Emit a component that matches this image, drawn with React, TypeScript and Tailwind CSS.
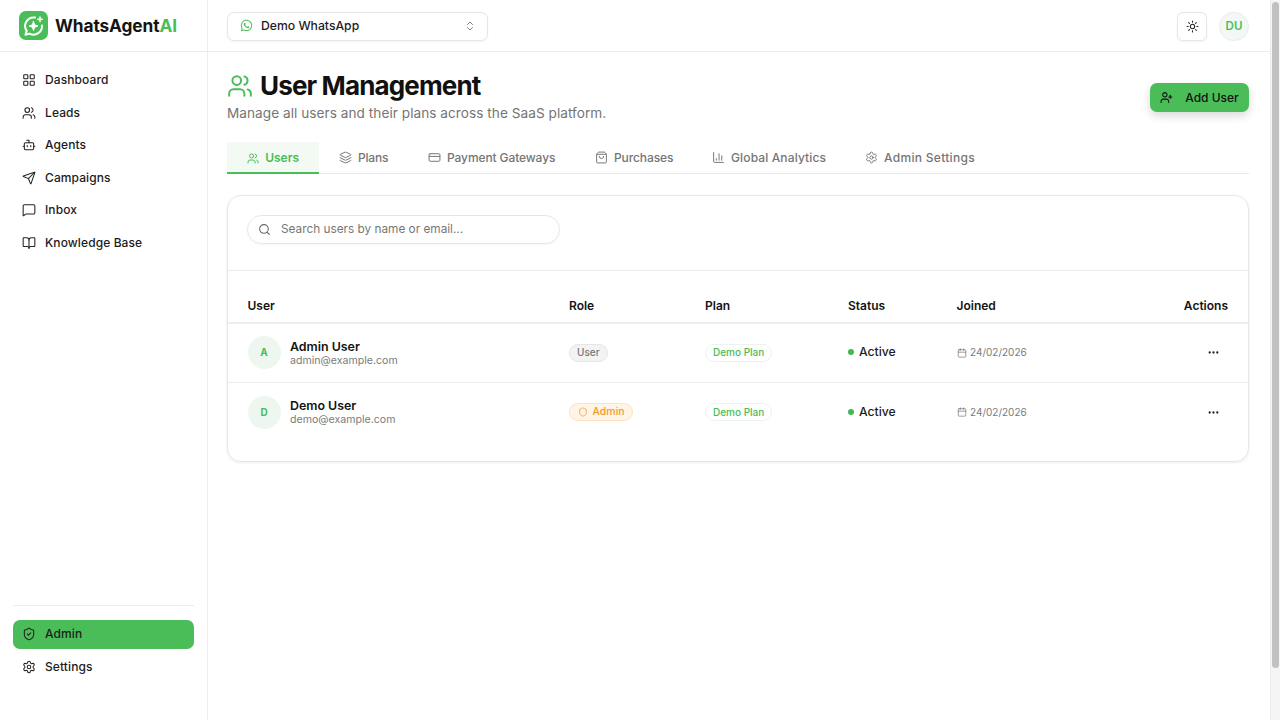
import React from "react";
import { LayoutGrid, Users, Bot, Send, MessageSquare, BookOpen, ShieldCheck, Settings, ChevronsUpDown, Sun, UserPlus, Layers, CreditCard, ShoppingBag, ChartColumn, Search, Calendar, Ellipsis, Shield } from "lucide-react";
import { FaWhatsapp } from "react-icons/fa";

const nav = [
  { label: "Dashboard", Icon: LayoutGrid },
  { label: "Leads", Icon: Users },
  { label: "Agents", Icon: Bot },
  { label: "Campaigns", Icon: Send },
  { label: "Inbox", Icon: MessageSquare },
  { label: "Knowledge Base", Icon: BookOpen },
];

const tabs = [
  { label: "Plans", Icon: Layers, w: "w-[89px] tracking-[-0.2px]" },
  { label: "Payment Gateways", Icon: CreditCard, w: "w-[167px] tracking-[-0.1px]" },
  { label: "Purchases", Icon: ShoppingBag, w: "w-[117px] tracking-[-0.1px]" },
  { label: "Global Analytics", Icon: ChartColumn, w: "w-[153px] tracking-[0.13px]" },
  { label: "Admin Settings", Icon: Settings, w: "w-[149px] tracking-[0.3px]" },
];

function Logo() {
  return (
    <div className="w-[29px] h-[29px] rounded-[7px] bg-[#4abd58] flex items-center justify-center shrink-0">
      <svg viewBox="0 0 24 24" className="w-[24px] h-[24px]" fill="none" stroke="white" strokeWidth="2" strokeLinecap="round" strokeLinejoin="round">
        <path d="M20 11.5A8.5 8.5 0 0 1 7.6 19.6L3.5 20.8l1.2-3.9A8.5 8.5 0 0 1 13 3.6" />
        <path d="M11.5 7.5l1.2 3.3 3.3 1.2-3.3 1.2-1.2 3.3-1.2-3.3L7 12l3.3-1.2z" fill="white" strokeWidth="1" />
        <path d="M18 3v4.4M15.8 5.2h4.4" strokeWidth="1.6" />
      </svg>
    </div>
  );
}

function NavItem({ label, Icon, active }: { label: string; Icon: React.ComponentType<any>; active?: boolean }) {
  return (
    <div className={`h-[29px] flex items-center gap-[9px] px-[9px] rounded-[7px] text-[12px] font-medium tracking-[0.1px] text-[#1c1c1c] ${active ? "bg-[#4abd58]" : ""}`}>
      <Icon className="w-[14px] h-[14px] text-[#222]" strokeWidth={1.8} />
      <span>{label}</span>
    </div>
  );
}

function Row({ initial, name, email, admin }: { initial: string; name: string; email: string; admin?: boolean }) {
  return (
    <div className="grid grid-cols-[321.5px_136px_143px_108.5px_1fr_auto] items-center h-[59px] pl-[19.5px] pr-5 border-b border-[#eeeeee] last:border-b-0">
      <div className="flex items-center gap-[9.5px]">
        <div className="w-[33px] h-[33px] rounded-full bg-[#edf7ef] text-[#4abd58] text-[10px] font-bold flex items-center justify-center">{initial}</div>
        <div className="flex flex-col">
          <span className="text-[12.4px] leading-[15px] font-semibold text-[#141414]">{name}</span>
          <span className="text-[10.6px] leading-[13px] text-[#7b7b7b]">{email}</span>
        </div>
      </div>
      <div className="flex">
        {admin ? (
          <span className="inline-flex items-center gap-[5px] h-[18px] px-[7.5px] rounded-full bg-[#fff4e6] border border-[#fde3c2] text-[#f5982a] text-[10.5px] font-medium">
            <Shield className="w-[10px] h-[10px]" strokeWidth={1.8} />
            Admin
          </span>
        ) : (
          <span className="inline-flex items-center h-[18px] px-[7px] rounded-full bg-[#f3f3f3] border border-[#e6e6e6] text-[#777] text-[10px] font-medium">User</span>
        )}
      </div>
      <div className="flex">
        <span className="inline-flex items-center h-[18px] px-[7px] rounded-full bg-white border border-[#e9f5eb] text-[#4abd58] text-[10px] font-medium">Demo Plan</span>
      </div>
      <div className="flex items-center gap-[5px]">
        <span className="w-[6px] h-[6px] rounded-full bg-[#3fb950]" />
        <span className="text-[12.2px] font-medium text-[#1c1c1c]">Active</span>
      </div>
      <div className="flex items-center gap-[3.5px] text-[10px] text-[#7b7b7b]">
        <Calendar className="w-[10px] h-[10px]" strokeWidth={1.8} />
        24/02/2026
      </div>
      <div className="w-[29px] flex justify-center">
        <Ellipsis className="w-[13px] h-[13px] text-[#222]" strokeWidth={2.2} />
      </div>
    </div>
  );
}

export default function App() {
  return (
    <div className="flex h-screen w-[1280px] overflow-hidden bg-white font-['Inter',sans-serif] text-[#141414]">
      <aside className="w-[208px] shrink-0 border-r border-[#ececec] flex flex-col">
        <div className="h-[52px] shrink-0 flex items-center gap-[7px] px-[19px] border-b border-[#ececec]">
          <Logo />
          <span className="text-[17.3px] font-bold tracking-[-0.1px] text-[#141414]">
            WhatsAgent<span className="text-[#4abd58]">AI</span>
          </span>
        </div>
        <nav className="flex-1 flex flex-col gap-[3.5px] px-[13px] pt-[13.5px]">
          {nav.map((n) => (
            <NavItem key={n.label} {...n} />
          ))}
        </nav>
        <div className="px-[13px] pb-[39px]">
          <div className="border-t border-[#ececec] pt-[14px] flex flex-col gap-[3.5px]">
            <NavItem label="Admin" Icon={ShieldCheck} active />
            <NavItem label="Settings" Icon={Settings} />
          </div>
        </div>
      </aside>

      <div className="flex-1 flex flex-col min-w-0">
        <header className="h-[52px] shrink-0 flex items-center justify-between pl-[19px] pr-[21px] pt-[1px] border-b border-[#ececec]">
          <div className="w-[261px] h-[29px] flex items-center justify-between pl-[12px] pr-[11px] rounded-[7px] border border-[#e6e6e6] shadow-[0_1px_2px_rgba(0,0,0,0.05)]">
            <div className="flex items-center gap-[8px]">
              <FaWhatsapp className="w-[13px] h-[13px] text-[#4abd58]" />
              <span className="text-[12.2px] font-medium text-[#1c1c1c]">Demo WhatsApp</span>
            </div>
            <ChevronsUpDown className="w-[12px] h-[12px] text-[#777]" strokeWidth={1.8} />
          </div>
          <div className="flex items-center gap-[12px]">
            <div className="w-[30px] h-[29px] rounded-[6px] border border-[#e6e6e6] shadow-[0_1px_2px_rgba(0,0,0,0.05)] flex items-center justify-center">
              <Sun className="w-[13px] h-[13px] text-[#222]" strokeWidth={1.9} />
            </div>
            <div className="w-[30px] h-[29px] pt-[1px] rounded-full bg-[#f3f8f4] border border-[#e9eeea] text-[#4abd58] text-[11.5px] font-semibold flex items-center justify-center">DU</div>
          </div>
        </header>

        <main className="flex-1 pl-[19px] pr-[21px] pt-[19px]">
          <div className="flex items-start justify-between">
            <div>
              <div className="flex items-center gap-[7px]">
                <Users className="w-[26px] h-[26px] text-[#4abd58]" strokeWidth={1.8} />
                <h1 className="text-[26px] leading-[30px] font-bold tracking-[-0.85px] text-[#111]">User Management</h1>
              </div>
              <p className="mt-[3px] text-[13.6px] leading-[18px] tracking-[0.05px] text-[#757575]">Manage all users and their plans across the SaaS platform.</p>
            </div>
            <button className="mt-[12px] h-[29px] w-[99px] flex items-center justify-center gap-[12px] rounded-[7px] bg-[#4abd58] text-[12px] font-medium text-[#111] shadow-[0_4px_10px_rgba(0,0,0,0.15)]">
              <UserPlus className="w-[13px] h-[13px]" strokeWidth={1.9} />
              Add User
            </button>
          </div>

          <div className="mt-[20px] flex border-b border-[#e8e8e8] h-[32px]">
            <div className="w-[92px] h-[32px] pt-[2px] flex items-center gap-[6px] px-[20px] bg-[#f2faf3] border-b-2 border-[#4abd58] text-[#4abd58] text-[12px] font-semibold">
              <Users className="w-[13px] h-[13px]" strokeWidth={1.9} />
              Users
            </div>
            {tabs.map(({ label, Icon, w }) => (
              <div key={label} className={`${w} h-[31px] flex items-center gap-[6px] px-[20px] whitespace-nowrap text-[12px] font-medium text-[#757575]`}>
                <Icon className="w-[13px] h-[13px] shrink-0" strokeWidth={1.8} />
                {label}
              </div>
            ))}
          </div>

          <section className="mt-[21px] h-[267px] rounded-[14px] border border-[#e6e6e6] shadow-[0_1px_3px_rgba(0,0,0,0.08)]">
            <div className="h-[75px] border-b border-[#ececec] pl-[19px] pr-5 pt-[19px]">
              <div className="w-[313px] h-[29px] flex items-center gap-[10px] px-[10px] rounded-full border border-[#e6e6e6] shadow-[0_1px_2px_rgba(0,0,0,0.04)]">
                <Search className="w-[13px] h-[13px] text-[#666]" strokeWidth={1.9} />
                <span className="text-[11.8px] text-[#777]">Search users by name or email...</span>
              </div>
            </div>
            <div className="grid grid-cols-[321.5px_136px_143px_108.5px_1fr_auto] items-center h-[52.5px] pt-[20px] pl-[19.5px] pr-5 border-b-2 border-[#eeeeee] text-[12px] font-semibold text-[#141414]">
              <span>User</span>
              <span>Role</span>
              <span>Plan</span>
              <span>Status</span>
              <span>Joined</span>
              <span className="text-right">Actions</span>
            </div>
            <Row initial="A" name="Admin User" email="admin@example.com" />
            <Row initial="D" name="Demo User" email="demo@example.com" admin />
          </section>
        </main>
      </div>

      <div className="w-[10px] shrink-0 bg-[#f5f5f5] border-l border-[#ececec] flex justify-center py-[2px]">
        <div className="w-[7px] h-[666px] rounded-full bg-[#c1c1c1]" />
      </div>
    </div>
  );
}
